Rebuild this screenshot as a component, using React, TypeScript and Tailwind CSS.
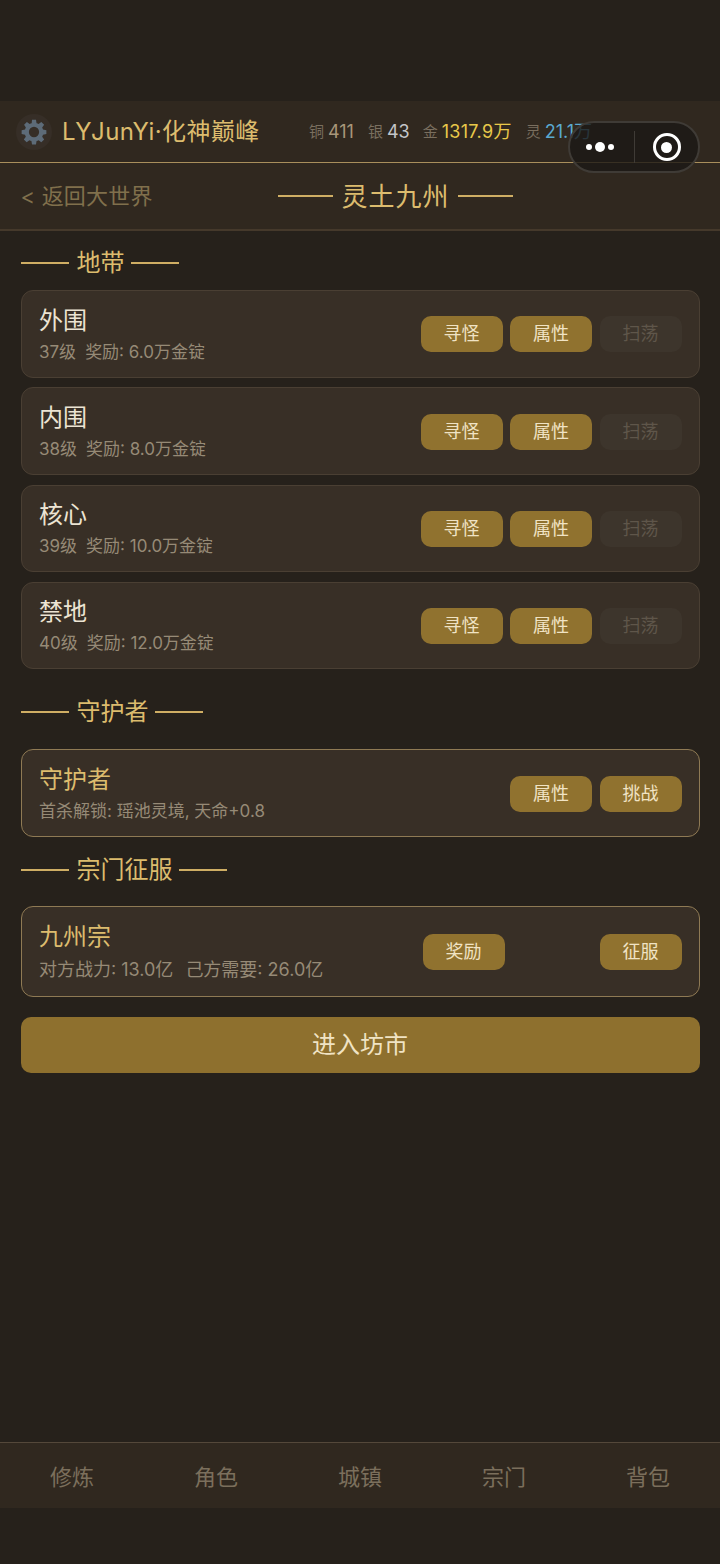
import { ReactNode } from 'react';

const FONT = "font-['Inter','Noto_Sans_CJK_SC',sans-serif]";

const ZONES = [
  { name: '外围', level: '37级', reward: '奖励: 6.0万金锭' },
  { name: '内围', level: '38级', reward: '奖励: 8.0万金锭' },
  { name: '核心', level: '39级', reward: '奖励: 10.0万金锭' },
  { name: '禁地', level: '40级', reward: '奖励: 12.0万金锭' },
];

const TABS = ['修炼', '角色', '城镇', '宗门', '背包'];

function Btn({ children, off }: { children: ReactNode; off?: boolean }) {
  return (
    <div
      className={
        off
          ? 'w-[82px] h-9 rounded-[10px] flex items-center justify-center text-lg bg-[#3d352c] text-[#5f564a]'
          : 'w-[82px] h-9 rounded-[10px] flex items-center justify-center text-lg bg-[#90722f] text-[#f0e3c4]'
      }
    >
      {children}
    </div>
  );
}

function SectionTitle({ children }: { children: ReactNode }) {
  return (
    <div className="flex items-center text-2xl leading-8 text-[#dcbc6e]">
      <span className="w-12 h-[1.5px] bg-[#cfae64]" />
      <span className="ml-2 mr-[6px]">{children}</span>
      <span className="w-12 h-[1.5px] bg-[#cfae64]" />
    </div>
  );
}

function Gear() {
  return (
    <svg width="28" height="28" viewBox="0 0 24 24" fill="#5d6b78">
      <path
        fillRule="evenodd"
        d="M10.3 1.5h3.4l.5 2.9c.6.2 1.2.4 1.7.7l2.4-1.7 2.4 2.4-1.7 2.4c.3.5.5 1.1.7 1.7l2.9.5v3.4l-2.9.5c-.2.6-.4 1.2-.7 1.7l1.7 2.4-2.4 2.4-2.4-1.7c-.5.3-1.1.5-1.7.7l-.5 2.9h-3.4l-.5-2.9c-.6-.2-1.2-.4-1.7-.7l-2.4 1.7-2.4-2.4 1.7-2.4c-.3-.5-.5-1.1-.7-1.7l-2.9-.5v-3.4l2.9-.5c.2-.6.4-1.2.7-1.7L3.5 5.8l2.4-2.4 2.4 1.7c.5-.3 1.1-.5 1.7-.7zM12 7.6a4.4 4.4 0 1 0 0 8.8 4.4 4.4 0 0 0 0-8.8z"
      />
    </svg>
  );
}

function Capsule() {
  return (
    <div className="absolute left-[568px] top-[121px] w-[132px] h-[52px] rounded-full border-2 border-[#3f3b36] bg-[#1b1815]/80 flex items-center">
      <div className="w-[64px] flex items-center justify-center gap-[2px] pr-1">
        <span className="w-[6px] h-[6px] rounded-full bg-white" />
        <span className="w-[10px] h-[10px] rounded-full bg-white mx-[1px]" />
        <span className="w-[6px] h-[6px] rounded-full bg-white" />
      </div>
      <span className="w-px h-8 bg-[#3f3b36]" />
      <div className="flex-1 flex items-center justify-center">
        <span className="w-7 h-7 rounded-full border-[3px] border-white flex items-center justify-center">
          <span className="w-[11px] h-[11px] rounded-full bg-white" />
        </span>
      </div>
    </div>
  );
}

export default function App() {
  return (
    <div className={`${FONT} relative w-[720px] h-[1564px] bg-[#26211b] flex flex-col overflow-hidden`}>
      <div className="h-[101px]" />

      <div className="h-[62px] bg-[#30281f] border-b border-[#a98f5c] flex items-center pl-4 pr-[128px]">
        <div className="w-9 h-9 rounded-full bg-[#362e27] flex items-center justify-center">
          <Gear />
        </div>
        <span className="ml-[10px] text-2xl tracking-[0.4px] text-[#dcbc6e]">LYJunYi·化神巅峰</span>
        <div className="ml-auto flex items-center text-lg">
          <span className="text-[15px] text-[#7a6f5f]">铜</span>
          <span className="ml-1 text-[#a8977a]">411</span>
          <span className="ml-[14px] text-[15px] text-[#7a6f5f]">银</span>
          <span className="ml-1 text-[#c3c5c8]">43</span>
          <span className="ml-[13px] text-[15px] text-[#7a6f5f]">金</span>
          <span className="ml-1 tracking-[0.3px] text-[#e8c84a]">1317.9万</span>
          <span className="ml-[14px] text-[15px] text-[#7a6f5f]">灵</span>
          <span className="ml-1 text-[#5aa9cf]">21.1万</span>
        </div>
      </div>

      <div className="h-[68px] bg-[#30281f] border-b-2 border-[#45392b] flex items-center pl-[20.5px]">
        <span className="w-[257px] text-[22px] tracking-[0.2px] text-[#80704c]">&lt; 返回大世界</span>
        <div className="flex items-center gap-[9px] text-[26px] tracking-[1px] text-[#dcbc6e]">
          <span className="w-[55px] h-0.5 bg-[#cfae64]" />
          <span className="-mr-px">灵土九州</span>
          <span className="w-[55px] h-0.5 bg-[#cfae64]" />
        </div>
      </div>

      <div className="px-[20.5px] flex flex-col">
        <div className="pt-4 pb-[11px]">
          <SectionTitle>地带</SectionTitle>
        </div>
        <div className="flex flex-col gap-[9.75px]">
          {ZONES.map((z) => (
            <div
              key={z.name}
              className="h-[87.5px] rounded-xl border border-[#4a3f33] bg-[#382f26] flex items-center justify-between pt-px pl-[17.5px] pr-[17px]"
            >
              <div className="pt-[3.5px]">
                <div className="text-2xl leading-8 text-[#ece4d3]">{z.name}</div>
                <div className="text-[17px] leading-[31px] text-[#968a76] flex gap-[9px]">
                  <span>{z.level}</span>
                  <span>{z.reward}</span>
                </div>
              </div>
              <div className="flex gap-[7.5px]">
                <Btn>寻怪</Btn>
                <Btn>属性</Btn>
                <Btn off>扫荡</Btn>
              </div>
            </div>
          ))}
        </div>

        <div className="pt-[26.5px] pb-[21.5px]">
          <SectionTitle>守护者</SectionTitle>
        </div>
        <div className="h-[88px] rounded-xl border border-[#8f7a54] bg-[#382f26] flex items-center justify-between pt-px pl-[17.5px] pr-[17px]">
          <div className="pt-[3.5px]">
            <div className="text-2xl leading-8 text-[#dcbc6e]">守护者</div>
            <div className="text-[17px] leading-[31px] text-[#968a76]">首杀解锁: 瑶池灵境, 天命+0.8</div>
          </div>
          <div className="flex gap-[7.5px]">
            <Btn>属性</Btn>
            <Btn>挑战</Btn>
          </div>
        </div>

        <div className="pt-[16.5px] pb-[20.5px]">
          <SectionTitle>宗门征服</SectionTitle>
        </div>
        <div className="h-[91px] rounded-xl border border-[#8f7a54] bg-[#382f26] flex items-center pl-[17.5px] pr-[17px]">
          <div className="flex-1 pt-1">
            <div className="text-2xl leading-8 text-[#dcbc6e]">九州宗</div>
            <div className="text-lg leading-[34px] text-[#968a76] flex gap-3">
              <span>对方战力: 13.0亿</span>
              <span>己方需要: 26.0亿</span>
            </div>
          </div>
          <div className="w-[259px] flex justify-between">
            <Btn>奖励</Btn>
            <Btn>征服</Btn>
          </div>
        </div>

        <div className="mt-5 h-14 rounded-[10px] bg-[#8e702e] text-[#f0e3c4] text-2xl flex items-center justify-center">
          进入坊市
        </div>
      </div>

      <div className="mt-auto mb-14 h-[66px] bg-[#30281f] border-t border-[#54483a] flex items-center pt-1">
        {TABS.map((t) => (
          <div key={t} className="flex-1 text-center text-[22px] text-[#7b6f5c]">
            {t}
          </div>
        ))}
      </div>

      <Capsule />
    </div>
  );
}
